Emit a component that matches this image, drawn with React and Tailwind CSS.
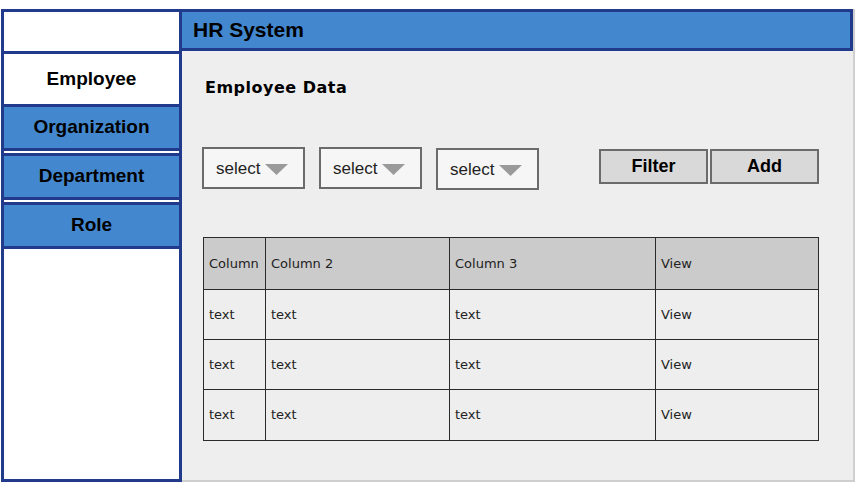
const navItems = ['Organization', 'Department', 'Role'];

const rows = [
  ['text', 'text', 'text', 'View'],
  ['text', 'text', 'text', 'View'],
  ['text', 'text', 'text', 'View']
];

const colWidths = ['w-[62px]', 'w-[184px]', 'w-[206px]', 'flex-1'];

function Select() {
  return (
    <div className="flex h-[42px] w-[103px] items-center gap-[5px] border-2 border-[#6b6b6b] bg-[#f6f6f6] pl-[12px] pt-[2px] text-[17px] text-[#222]">
      <span>select</span>
      <svg width="23" height="11" viewBox="0 0 23 11">
        <polygon points="0,0 23,0 11.5,11" fill="#9a9a9a" />
      </svg>
    </div>
  );
}

function Row({ cells, header }) {
  return (
    <div className={`flex ${header ? 'h-[52px] bg-[#cbcbcb]' : 'h-[50px]'} border-b-[1.5px] border-[#2a2a2a] last:border-b-0`}>
      {cells.map((cell, i) => (
        <div
          key={i}
          className={`${colWidths[i]} flex items-center px-[5px] ${i < 3 ? 'border-r-[1.5px] border-[#2a2a2a]' : ''}`}
        >
          {cell}
        </div>
      ))}
    </div>
  );
}

export default function App() {
  return (
    <div className="flex h-[484px] w-[859px] bg-white pl-[1px] pt-[9px] font-['Liberation_Sans',Arial,sans-serif]">
      <aside className="flex h-[473px] w-[181px] flex-col border-[3px] border-[#223a8c] bg-white">
        <div className="h-[42px] border-b-[3px] border-[#223a8c]" />
        <div className="flex h-[50px] items-center justify-center text-[19px] font-bold text-black">
          Employee
        </div>
        <div className="flex flex-col gap-[2px]">
          {navItems.map((item) => (
            <div
              key={item}
              className="flex h-[47px] items-center justify-center border-y-[3px] border-[#223a8c] bg-[#4388cf] text-[19px] font-bold text-black"
            >
              {item}
            </div>
          ))}
        </div>
      </aside>

      <main className="flex h-[473px] w-[673px] flex-col border-r-2 border-b-2 border-[#cfcfcf] bg-[#eeeeee]">
        <header className="flex h-[42px] items-center border-[3px] border-l-0 border-[#223a8c] bg-[#4388cf] pl-[11px] text-[21px] font-bold text-black">
          HR System
        </header>

        <div className="flex flex-col pl-[20px]">
          <h1 className="mt-[25px] pl-[3px] font-['DejaVu_Sans',sans-serif] text-[16px] font-bold tracking-[0.5px] text-black">
            Employee Data
          </h1>

          <div className="mt-[47px] flex items-start">
            <div className="flex gap-[14px]">
              <Select />
              <Select />
              <div className="mt-[1px]">
                <Select />
              </div>
            </div>
            <div className="ml-[60px] mt-[2px] flex gap-[2px]">
              <button className="h-[35px] w-[109px] border-2 border-[#6b6b6b] bg-[#d9d9d9] text-[18px] font-bold text-black">
                Filter
              </button>
              <button className="h-[35px] w-[109px] border-2 border-[#6b6b6b] bg-[#d9d9d9] text-[18px] font-bold text-black">
                Add
              </button>
            </div>
          </div>

          <div className="mt-[47px] ml-[1px] flex w-[616px] flex-col border-[1.5px] border-[#2a2a2a] font-['DejaVu_Sans',sans-serif] text-[13px] text-[#222]">
            <Row header cells={['Column', 'Column 2', 'Column 3', 'View']} />
            {rows.map((r, i) => (
              <Row key={i} cells={r} />
            ))}
          </div>
        </div>
      </main>
    </div>
  );
}
